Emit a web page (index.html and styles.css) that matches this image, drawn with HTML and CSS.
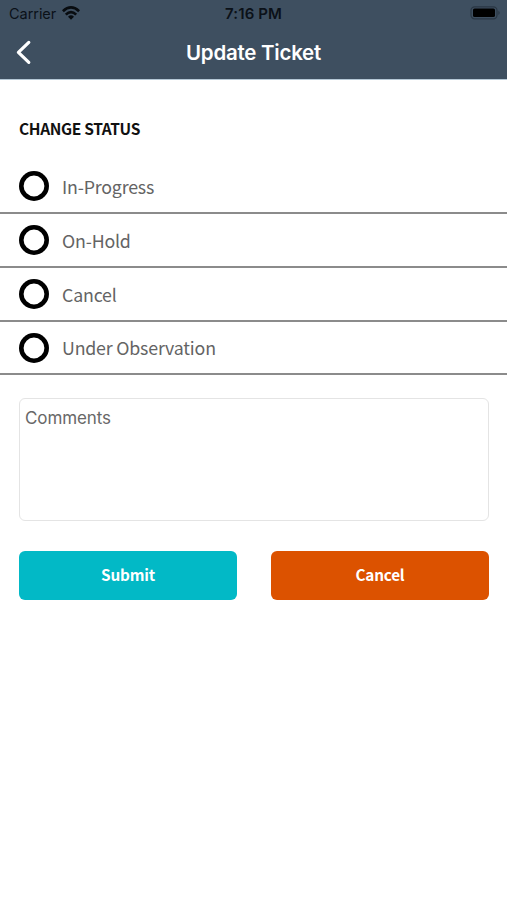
FILE: index.html
```html
<!DOCTYPE html>
<html lang="en">
<head>
<meta charset="utf-8">
<title>Update Ticket</title>
<link rel="stylesheet" href="styles.css">
</head>
<body>
<header class="header">
  <div class="status-bar">
    <div class="carrier"><span class="carrier-name">Carrier</span>
      <svg class="wifi" width="18" height="14" viewBox="0 0 18 14" fill="none" stroke="#080c10" stroke-width="2.7"><path d="M.9 5.2Q9-2.3 17.1 5.2M3.8 8.6Q9 3.6 14.2 8.6"/><path d="M6 10.7Q9 8 12 10.7L9 13.7Z" fill="#080c10" stroke="none"/></svg>
    </div>
    <div class="time">7:16 PM</div>
    <svg class="battery" width="31" height="14" viewBox="0 0 31 14"><rect x="1" y=".8" width="26" height="12" rx="3.6" fill="none" stroke="#2a3744" stroke-width="1.2"/><rect x="3" y="2.5" width="22" height="8.6" rx="1.6" fill="#000"/><path d="M28.4 4.7Q31 6.8 28.4 8.9Z" fill="#2a3744"/></svg>
  </div>
  <div class="nav-bar">
    <svg class="back" width="18" height="26" viewBox="0 0 18 26" fill="none" stroke="#fff" stroke-width="3.2" stroke-linecap="round" stroke-linejoin="round"><path d="M13.8 2.4 3.4 12.4 13.8 22.4"/></svg>
    <h1 class="title">Update Ticket</h1>
  </div>
</header>
<main>
  <h2 class="section-title">CHANGE STATUS</h2>
  <ul class="options">
    <li class="option"><span class="radio"></span><span class="label">In-Progress</span></li>
    <li class="option"><span class="radio"></span><span class="label">On-Hold</span></li>
    <li class="option"><span class="radio"></span><span class="label">Cancel</span></li>
    <li class="option"><span class="radio"></span><span class="label">Under Observation</span></li>
  </ul>
  <div class="comments">Comments</div>
  <div class="actions">
    <button class="button submit">Submit</button>
    <button class="button cancel">Cancel</button>
  </div>
</main>
</body>
</html>
```

FILE: styles.css
```css
* { box-sizing: border-box; }
body {
  margin: 0;
  min-height: 900px;
  background: #fff;
  font-family: "Noto Sans CJK SC", sans-serif;
}
.header {
  height: 80px;
  background: #3e4f60;
  border-bottom: 1px solid #b5c8d6;
  font-family: Inter, sans-serif;
}
.status-bar {
  display: grid;
  grid-template-columns: 1fr auto 1fr;
  align-items: center;
  height: 27px;
  padding: 0 6px 0 9px;
  color: #0b1118;
  font-size: 14.5px;
}
.carrier { display: flex; align-items: center; gap: 6px; }
.carrier-name { letter-spacing: -.05px; }
.wifi { display: block; margin-top: -2px; }
.time { margin-left: -3px; font-weight: 600; font-size: 15px; letter-spacing: .1px; }
.battery { display: block; justify-self: end; margin-top: -1px; }
.nav-bar {
  display: grid;
  grid-template-columns: 40px 1fr 40px;
  align-items: center;
  height: 51px;
}
.back { margin-left: 15px; }
.title {
  margin: 0;
  color: #fff;
  font-size: 20.5px;
  font-weight: 600;
  line-height: 28px;
  letter-spacing: -.25px;
  text-align: center;
}
.section-title {
  margin: 37px 0 0 19px;
  font-size: 15.5px;
  line-height: 22px;
  font-weight: 700;
  letter-spacing: -.34px;
  color: #111;
}
.options { margin: 21px 0 0; padding: 0; list-style: none; }
.option {
  display: flex;
  align-items: center;
  gap: 13px;
  height: 53.85px;
  padding: 1px 0 0 19px;
  border-bottom: 2px solid #8b8b8b;
}
.radio {
  width: 30px;
  height: 30px;
  border-radius: 50%;
  box-shadow: inset 0 0 0 4.6px #000;
}
.label {
  margin-top: -1px;
  color: #646464;
  font-size: 17.8px;
  line-height: 28px;
  letter-spacing: -.19px;
}
.comments {
  height: 123px;
  margin: 22.6px 18px 0 19px;
  padding: 7px 5px;
  border: 1px solid #e4e4e4;
  border-radius: 6px;
  color: #686868;
  font: 17px/24px Inter, sans-serif;
  letter-spacing: -.1px;
}
.actions {
  display: grid;
  grid-template-columns: 1fr 1fr;
  gap: 34px;
  margin: 30px 18px 0 19px;
}
.button {
  height: 49px;
  padding: 0 0 2px;
  border: 0;
  border-radius: 6px;
  color: #fff;
  font: 700 15.3px/24px "Noto Sans CJK SC", sans-serif;
  letter-spacing: -.2px;
}
.submit { background: #02b9c6; }
.cancel { background: #dc5200; }
```
